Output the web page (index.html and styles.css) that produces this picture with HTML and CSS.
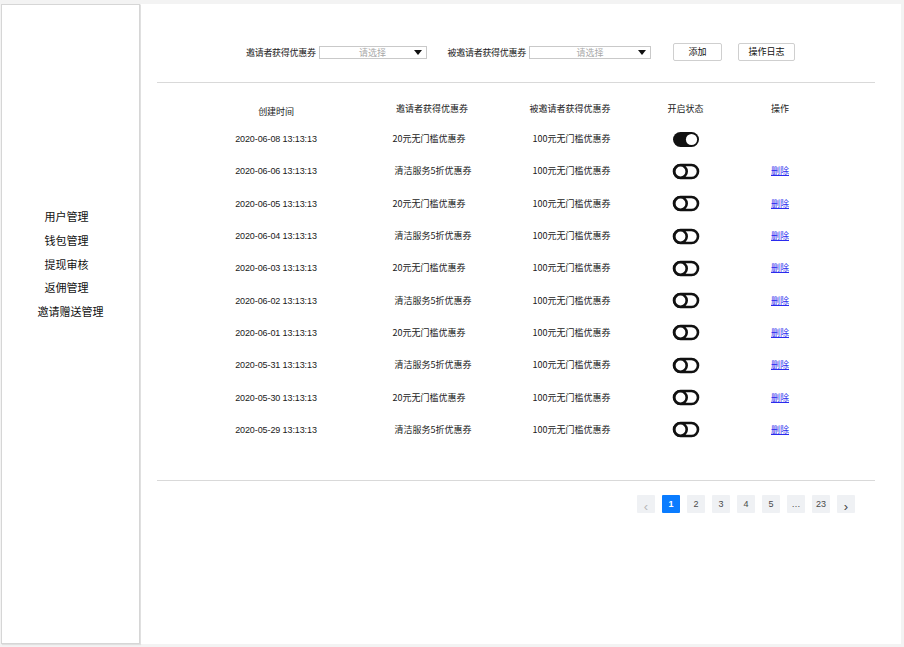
FILE: index.html
```html
<!DOCTYPE html>
<html lang="zh-CN">
<head>
<meta charset="utf-8">
<title>邀请赠送管理</title>
<link rel="stylesheet" href="styles.css">
</head>
<body>
<div class="app">
  <aside class="sidebar">
    <nav class="menu">
      <div class="menu-item">用户管理</div>
      <div class="menu-item">钱包管理</div>
      <div class="menu-item">提现审核</div>
      <div class="menu-item">返佣管理</div>
      <div class="menu-item wide">邀请赠送管理</div>
    </nav>
  </aside>
  <main class="main">
    <div class="filters">
      <span class="label">邀请者获得优惠券</span>
      <div class="select s1"><span class="ph">请选择</span><span class="arrow"></span></div>
      <span class="label l2">被邀请者获得优惠券</span>
      <div class="select s2"><span class="ph">请选择</span><span class="arrow"></span></div>
      <button class="btn b-add">添加</button>
      <button class="btn b-log">操作日志</button>
    </div>
    <div class="rule"></div>
    <div class="table">
      <div class="row head">
        <div class="c c1 h1">创建时间</div>
        <div class="c c2">邀请者获得优惠券</div>
        <div class="c c3">被邀请者获得优惠券</div>
        <div class="c c4">开启状态</div>
        <div class="c c5">操作</div>
      </div>
      <div class="row">
        <div class="c c1">2020-06-08 13:13:13</div>
        <div class="c c2 a">20元无门槛优惠券</div>
        <div class="c c3">100元无门槛优惠券</div>
        <div class="c c4"><svg class="tg" viewBox="0 0 28 17"><rect x="1" y="1" width="26" height="15" rx="7.5" fill="#111"/><circle cx="19.5" cy="8.5" r="5.6" fill="#fff"/></svg></div>
        <div class="c c5"></div>
      </div>
      <div class="row">
        <div class="c c1">2020-06-06 13:13:13</div>
        <div class="c c2 b">清洁服务5折优惠券</div>
        <div class="c c3">100元无门槛优惠券</div>
        <div class="c c4"><svg class="tg" viewBox="0 0 28 17"><rect x="2" y="2" width="24" height="13" rx="6.5" fill="#fff" stroke="#111" stroke-width="2.6"/><circle cx="8.5" cy="8.5" r="6.2" fill="#fff" stroke="#111" stroke-width="2.6"/></svg></div>
        <div class="c c5"><a href="#" class="del">删除</a></div>
      </div>
      <div class="row">
        <div class="c c1">2020-06-05 13:13:13</div>
        <div class="c c2 a">20元无门槛优惠券</div>
        <div class="c c3">100元无门槛优惠券</div>
        <div class="c c4"><svg class="tg" viewBox="0 0 28 17"><rect x="2" y="2" width="24" height="13" rx="6.5" fill="#fff" stroke="#111" stroke-width="2.6"/><circle cx="8.5" cy="8.5" r="6.2" fill="#fff" stroke="#111" stroke-width="2.6"/></svg></div>
        <div class="c c5"><a href="#" class="del">删除</a></div>
      </div>
      <div class="row">
        <div class="c c1">2020-06-04 13:13:13</div>
        <div class="c c2 b">清洁服务5折优惠券</div>
        <div class="c c3">100元无门槛优惠券</div>
        <div class="c c4"><svg class="tg" viewBox="0 0 28 17"><rect x="2" y="2" width="24" height="13" rx="6.5" fill="#fff" stroke="#111" stroke-width="2.6"/><circle cx="8.5" cy="8.5" r="6.2" fill="#fff" stroke="#111" stroke-width="2.6"/></svg></div>
        <div class="c c5"><a href="#" class="del">删除</a></div>
      </div>
      <div class="row">
        <div class="c c1">2020-06-03 13:13:13</div>
        <div class="c c2 a">20元无门槛优惠券</div>
        <div class="c c3">100元无门槛优惠券</div>
        <div class="c c4"><svg class="tg" viewBox="0 0 28 17"><rect x="2" y="2" width="24" height="13" rx="6.5" fill="#fff" stroke="#111" stroke-width="2.6"/><circle cx="8.5" cy="8.5" r="6.2" fill="#fff" stroke="#111" stroke-width="2.6"/></svg></div>
        <div class="c c5"><a href="#" class="del">删除</a></div>
      </div>
      <div class="row">
        <div class="c c1">2020-06-02 13:13:13</div>
        <div class="c c2 b">清洁服务5折优惠券</div>
        <div class="c c3">100元无门槛优惠券</div>
        <div class="c c4"><svg class="tg" viewBox="0 0 28 17"><rect x="2" y="2" width="24" height="13" rx="6.5" fill="#fff" stroke="#111" stroke-width="2.6"/><circle cx="8.5" cy="8.5" r="6.2" fill="#fff" stroke="#111" stroke-width="2.6"/></svg></div>
        <div class="c c5"><a href="#" class="del">删除</a></div>
      </div>
      <div class="row">
        <div class="c c1">2020-06-01 13:13:13</div>
        <div class="c c2 a">20元无门槛优惠券</div>
        <div class="c c3">100元无门槛优惠券</div>
        <div class="c c4"><svg class="tg" viewBox="0 0 28 17"><rect x="2" y="2" width="24" height="13" rx="6.5" fill="#fff" stroke="#111" stroke-width="2.6"/><circle cx="8.5" cy="8.5" r="6.2" fill="#fff" stroke="#111" stroke-width="2.6"/></svg></div>
        <div class="c c5"><a href="#" class="del">删除</a></div>
      </div>
      <div class="row">
        <div class="c c1">2020-05-31 13:13:13</div>
        <div class="c c2 b">清洁服务5折优惠券</div>
        <div class="c c3">100元无门槛优惠券</div>
        <div class="c c4"><svg class="tg" viewBox="0 0 28 17"><rect x="2" y="2" width="24" height="13" rx="6.5" fill="#fff" stroke="#111" stroke-width="2.6"/><circle cx="8.5" cy="8.5" r="6.2" fill="#fff" stroke="#111" stroke-width="2.6"/></svg></div>
        <div class="c c5"><a href="#" class="del">删除</a></div>
      </div>
      <div class="row">
        <div class="c c1">2020-05-30 13:13:13</div>
        <div class="c c2 a">20元无门槛优惠券</div>
        <div class="c c3">100元无门槛优惠券</div>
        <div class="c c4"><svg class="tg" viewBox="0 0 28 17"><rect x="2" y="2" width="24" height="13" rx="6.5" fill="#fff" stroke="#111" stroke-width="2.6"/><circle cx="8.5" cy="8.5" r="6.2" fill="#fff" stroke="#111" stroke-width="2.6"/></svg></div>
        <div class="c c5"><a href="#" class="del">删除</a></div>
      </div>
      <div class="row">
        <div class="c c1">2020-05-29 13:13:13</div>
        <div class="c c2 b">清洁服务5折优惠券</div>
        <div class="c c3">100元无门槛优惠券</div>
        <div class="c c4"><svg class="tg" viewBox="0 0 28 17"><rect x="2" y="2" width="24" height="13" rx="6.5" fill="#fff" stroke="#111" stroke-width="2.6"/><circle cx="8.5" cy="8.5" r="6.2" fill="#fff" stroke="#111" stroke-width="2.6"/></svg></div>
        <div class="c c5"><a href="#" class="del">删除</a></div>
      </div>
    </div>
    <div class="rule rule2"></div>
    <div class="pager">
      <span class="pg prev">&#8249;</span>
      <span class="pg active">1</span>
      <span class="pg">2</span>
      <span class="pg">3</span>
      <span class="pg">4</span>
      <span class="pg">5</span>
      <span class="pg">…</span>
      <span class="pg">23</span>
      <span class="pg next">&#8250;</span>
    </div>
  </main>
</div>
</body>
</html>
```

FILE: styles.css
```css
* { box-sizing: border-box; }
html, body { margin: 0; padding: 0; }
body {
  background: #f3f3f3;
  font-family: "Liberation Sans", "Noto Sans CJK SC", sans-serif;
  color: #1a1a1a;
  width: 904px;
  height: 647px;
  overflow: hidden;
}
.app {
  display: flex;
  gap: 1px;
  padding: 4px 3px 3px 1px;
  height: 647px;
}
.sidebar {
  width: 139px;
  height: 640px;
  background: #fff;
  border: 1px solid #d6d6d6;
  box-shadow: 1px 1px 1px rgba(0,0,0,0.08);
  padding-top: 200px;
  padding-right: 8px;
}
.menu { display: flex; flex-direction: column; align-items: center; }
.menu-item {
  font-family: "Noto Sans CJK SC", sans-serif;
  font-size: 11px;
  line-height: 23.8px;
  height: 23.8px;
  color: #111;
}
.menu-item.wide { margin-left: 8px; }
.main {
  flex: 1;
  height: 640px;
  background: #fff;
  padding-top: 39px;
}
.filters {
  display: flex;
  align-items: center;
  height: 18px;
  padding-left: 105px;
  font-size: 9px;
  font-family: "Noto Sans CJK SC", sans-serif;
}
.label { margin-right: 3px; letter-spacing: -0.3px; }
.l2 { margin-left: 21px; }
.select {
  position: relative;
  height: 13px;
  border: 1px solid #c9c9c9;
  display: flex;
  align-items: center;
  justify-content: center;
}
.s1 { width: 108px; }
.s2 { width: 122px; }
.ph { color: #a8a8a8; font-size: 9px; line-height: 11px; }
.arrow {
  position: absolute;
  right: 4px;
  top: 3px;
  width: 0; height: 0;
  border-left: 4px solid transparent;
  border-right: 4px solid transparent;
  border-top: 5px solid #111;
}
.btn {
  height: 18px;
  padding: 0;
  border: 1px solid #cfcfcf;
  border-radius: 2px;
  background: #fff;
  font-family: "Noto Sans CJK SC", sans-serif;
  font-size: 9px;
  color: #111;
  line-height: 16px;
}
.b-add { width: 49px; margin-left: 22px; }
.b-log { width: 57px; margin-left: 16px; }
.rule {
  height: 1px;
  background: #d9d9d9;
  margin: 21px 26px 0 16px;
}
.table { padding-top: 12px; padding-left: 55px; }
.row {
  display: grid;
  grid-template-columns: 160px 152px 124px 108px 80px;
  height: 32.3px;
  align-items: center;
  font-size: 9px;
}
.row.head { height: 28px; font-family: "Noto Sans CJK SC", sans-serif; }
.c { text-align: center; line-height: 12px; }
.h1 { padding-top: 5px; }
.c1 { letter-spacing: -0.1px; }
.c2, .c3 { font-family: "Noto Sans CJK SC", sans-serif; }
.c2.a { padding-right: 6px; }
.c2.b { padding-left: 2px; }
.row:not(.head) .c3 { padding-left: 3px; }
.c4 { display: flex; justify-content: center; padding-right: 1px; }
.tg { width: 28px; height: 17px; display: block; }
.del {
  color: #2b2bee;
  text-decoration: underline;
  font-family: "Noto Sans CJK SC", sans-serif;
  font-size: 9px;
}
.rule2 { margin-top: 34px; }
.pager {
  display: flex;
  justify-content: flex-end;
  gap: 7px;
  margin-top: 14px;
  padding-right: 46px;
}
.pg {
  width: 18px;
  height: 18px;
  background: #eff1f4;
  border-radius: 1px;
  font-size: 9px;
  color: #4a4a4a;
  display: flex;
  align-items: center;
  justify-content: center;
}
.pg.active { background: #0a7cff; color: #fff; font-weight: bold; }
.pg.prev { color: #b8b8b8; font-size: 13px; padding-top: 5px; }
.pg.next { color: #444; font-size: 13px; padding-top: 5px; }
```
